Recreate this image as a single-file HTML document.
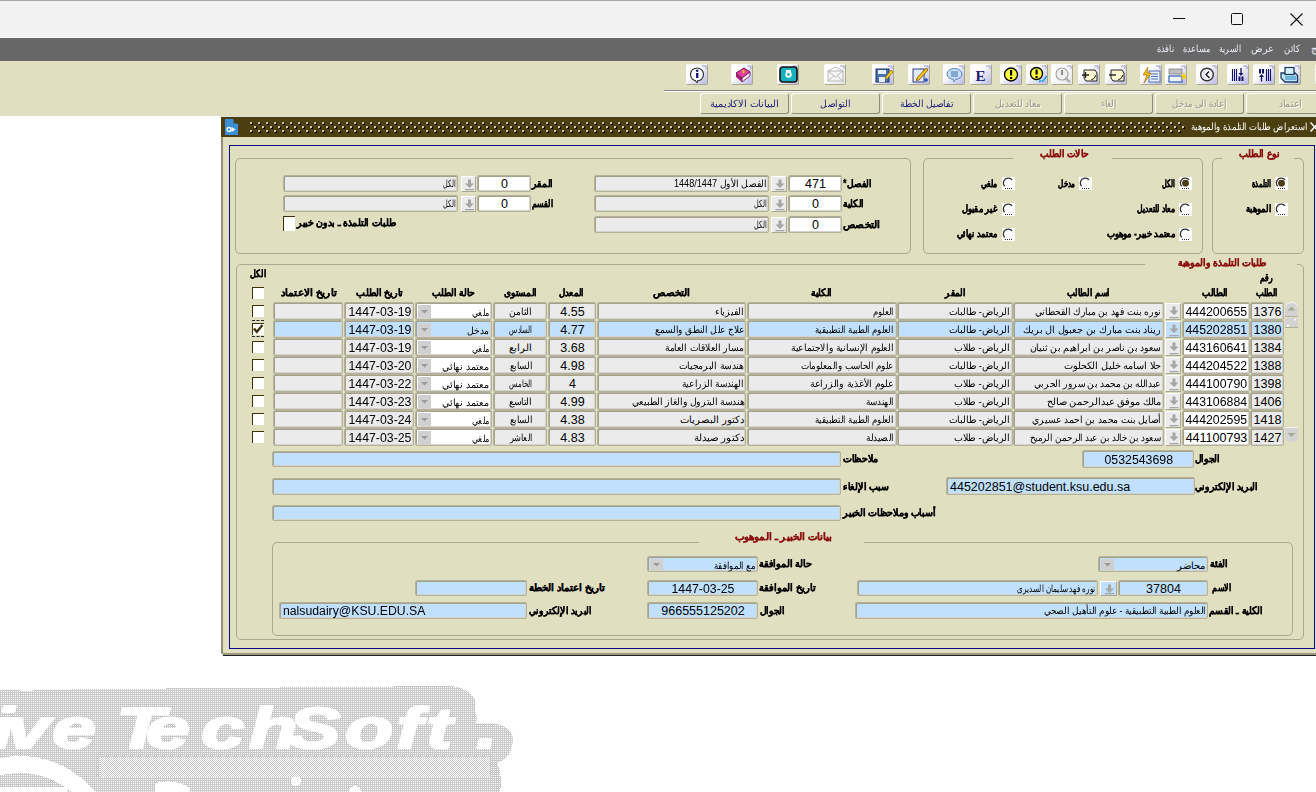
<!DOCTYPE html>
<html><head><meta charset="utf-8">
<style>
*{box-sizing:border-box;margin:0;padding:0}
html,body{width:1316px;height:792px;overflow:hidden;background:#fff;font-family:"Liberation Sans",sans-serif;font-size:11px;color:#000;position:relative}
.a{position:absolute}
.s{display:inline-block;white-space:nowrap}
.ib{width:22px;height:21px;border-radius:2px;border:1px solid #fcfcfc;border-right:2px solid #a9a78e;border-bottom:2px solid #a9a78e}
.ib svg{position:absolute;left:0;top:0}
.btn{width:89px;height:21px;border:1px solid #fff;border-right-color:#8d8c76;border-bottom-color:#8d8c76;border-radius:3px}
.lbl{font-weight:bold;font-size:10px;white-space:nowrap;direction:rtl;-webkit-text-stroke:0.3px #000}
.gt{font-weight:bold;font-size:10px;white-space:nowrap;direction:rtl;color:#8b1010;-webkit-text-stroke:0.3px #8b1010}
.ar{font-size:10px;white-space:nowrap;direction:rtl}
.nm{font-size:12.5px;white-space:nowrap}
.fld{border:1px solid #b4b29a;box-shadow:inset 1px 1px 0 #a3a189,inset -1px -1px 0 #d4d4ca;border-radius:2px}
.lov{border:1px solid #fff;border-right-color:#a9a890;border-bottom-color:#a9a890}
.rad{width:13px;height:13px;background:#fff}
.chk{width:12px;height:12px;background:#fff;border-top:1px solid #3c3205;border-left:1px solid #3c3205}
</style></head><body>
<div class="a" style="left:0px;top:0px;width:1316px;height:38px;background:#f2f2f2;border-top:1px solid #a8a8a8"></div>
<div class="a" style="left:1173px;top:18px;width:12px;height:1px;background:#111"></div>
<div class="a" style="left:1231px;top:13px;width:12px;height:12px;border:1px solid #111;border-radius:1.5px"></div>
<svg class="a" style="left:1290px;top:13px" width="13" height="13"><path d="M0.5 0.5 L12.5 12.5 M12.5 0.5 L0.5 12.5" stroke="#111" stroke-width="1.1"/></svg>
<div class="a" style="left:0px;top:37px;width:1316px;height:1px;background:#fbfbfb"></div>
<div class="a" style="left:0px;top:38px;width:1316px;height:23px;background:#676767"></div>
<div class="a ar" style="left:1026px;top:41.0px;width:300px;height:16px;line-height:16px;text-align:right;color:#e9eef6"><span id="t1" class="s">دمج</span></div>
<div class="a ar" style="left:1000px;top:41.0px;width:300px;height:16px;line-height:16px;text-align:right;color:#e9eef6"><span id="t2" class="s" style="transform:scaleX(0.8421);transform-origin:right center">كائن</span></div>
<div class="a ar" style="left:974px;top:41.0px;width:300px;height:16px;line-height:16px;text-align:right;color:#e9eef6"><span id="t3" class="s" style="transform:scaleX(0.9583);transform-origin:right center">عرض</span></div>
<div class="a ar" style="left:941px;top:41.0px;width:300px;height:16px;line-height:16px;text-align:right;color:#e9eef6"><span id="t4" class="s" style="transform:scaleX(0.7586);transform-origin:right center">السرية</span></div>
<div class="a ar" style="left:910px;top:41.0px;width:300px;height:16px;line-height:16px;text-align:right;color:#e9eef6"><span id="t5" class="s" style="transform:scaleX(0.8182);transform-origin:right center">مساعدة</span></div>
<div class="a ar" style="left:874px;top:41.0px;width:300px;height:16px;line-height:16px;text-align:right;color:#e9eef6"><span id="t6" class="s" style="transform:scaleX(0.8095);transform-origin:right center">نافذة</span></div>
<div class="a" style="left:0px;top:61px;width:1316px;height:55px;background:#e0dfc0"></div>
<div class="a" style="left:664px;top:90px;width:652px;height:1px;background:#858585"></div>
<div class="a" style="left:664px;top:91px;width:652px;height:1px;background:#ffffff"></div>
<div class="a ib" style="left:686px;top:64px"><svg width="20" height="19"><defs><linearGradient id="g686" x1="0" y1="0" x2="1" y2="1"><stop offset="0.35" stop-color="#fff"/><stop offset="1" stop-color="#b9b9e2"/></linearGradient></defs><rect x="0" y="0" width="20" height="19" fill="url(#g686)"/><path d="M15 1 h4 v3" stroke="#9b9bd0" stroke-width="1" fill="none"/><circle cx="10" cy="9.5" r="6.5" fill="#fff" stroke="#333" stroke-width="1.2"/><path d="M8 15 l2 3 l1 -3" fill="#fff" stroke="#333" stroke-width="1"/><rect x="9" y="8" width="2.4" height="5" fill="#1a1a80"/><circle cx="10.2" cy="5.8" r="1.3" fill="#1a1a80"/></svg></div>
<div class="a ib" style="left:731px;top:64px"><svg width="20" height="19"><defs><linearGradient id="g731" x1="0" y1="0" x2="1" y2="1"><stop offset="0.35" stop-color="#fff"/><stop offset="1" stop-color="#b9b9e2"/></linearGradient></defs><rect x="0" y="0" width="20" height="19" fill="url(#g731)"/><path d="M15 1 h4 v3" stroke="#9b9bd0" stroke-width="1" fill="none"/><path d="M4 8 L12 3 L18 7 L10 13 Z" fill="#e040a0" stroke="#701050" stroke-width="1"/><path d="M4 8 L10 13 L10 17 L4 12 Z" fill="#a02070"/><path d="M10 13 L18 7 L18 11 L10 17 Z" fill="#f8e0f0" stroke="#701050" stroke-width="0.8"/><path d="M10 6 q2 -1 2 1 l-1 1" stroke="#ffd000" stroke-width="1.3" fill="none"/></svg></div>
<div class="a ib" style="left:777px;top:64px"><svg width="20" height="19"><defs><linearGradient id="g777" x1="0" y1="0" x2="1" y2="1"><stop offset="0.35" stop-color="#fff"/><stop offset="1" stop-color="#b9b9e2"/></linearGradient></defs><rect x="0" y="0" width="20" height="19" fill="url(#g777)"/><path d="M15 1 h4 v3" stroke="#9b9bd0" stroke-width="1" fill="none"/><rect x="2" y="2" width="17" height="15" rx="3" fill="#1ab0c0" stroke="#111" stroke-width="1.6"/><circle cx="10.5" cy="9.5" r="3.2" fill="#fff"/><circle cx="10.5" cy="9.5" r="1.4" fill="#1ab0c0"/><rect x="8" y="5" width="5" height="2" fill="#fff"/></svg></div>
<div class="a ib" style="left:824px;top:64px"><svg width="20" height="19"><defs><linearGradient id="g824" x1="0" y1="0" x2="1" y2="1"><stop offset="0.35" stop-color="#fff"/><stop offset="1" stop-color="#e4e4e8"/></linearGradient></defs><rect x="0" y="0" width="20" height="19" fill="url(#g824)"/><path d="M15 1 h4 v3" stroke="#9b9bd0" stroke-width="1" fill="none"/><rect x="3" y="6" width="15" height="10" fill="#f4f4f4" stroke="#b8b8b8" stroke-width="1"/><path d="M3 6 L10.5 12 L18 6 M3 16 L8.5 11 M18 16 L12.5 11 M3 6 L10.5 2 L18 6" stroke="#b8b8b8" stroke-width="1" fill="none"/></svg></div>
<div class="a ib" style="left:872px;top:64px"><svg width="20" height="19"><defs><linearGradient id="g872" x1="0" y1="0" x2="1" y2="1"><stop offset="0.35" stop-color="#fff"/><stop offset="1" stop-color="#b9b9e2"/></linearGradient></defs><rect x="0" y="0" width="20" height="19" fill="url(#g872)"/><path d="M15 1 h4 v3" stroke="#9b9bd0" stroke-width="1" fill="none"/><rect x="3" y="4" width="13" height="13" fill="#4a70b0" stroke="#203060" stroke-width="1"/><rect x="5" y="5" width="8" height="4" fill="#e8eef8"/><rect x="6" y="12" width="6" height="5" fill="#e8eef8"/><path d="M12 13 L18 5 L20 7 L14 14 Z" fill="#ffd020" stroke="#806000" stroke-width="0.7"/></svg></div>
<div class="a ib" style="left:908px;top:64px"><svg width="20" height="19"><defs><linearGradient id="g908" x1="0" y1="0" x2="1" y2="1"><stop offset="0.35" stop-color="#fff"/><stop offset="1" stop-color="#b9b9e2"/></linearGradient></defs><rect x="0" y="0" width="20" height="19" fill="url(#g908)"/><path d="M15 1 h4 v3" stroke="#9b9bd0" stroke-width="1" fill="none"/><rect x="4" y="4" width="11" height="13" fill="#e0e8f8" stroke="#304080" stroke-width="1"/><path d="M8 13 L17 3 L19 5 L10 15 L7.5 15.5 Z" fill="#ffc020" stroke="#705000" stroke-width="0.8"/><path d="M15 15 h4 M17 13 v4" stroke="#2050c0" stroke-width="1.4"/></svg></div>
<div class="a ib" style="left:943px;top:64px"><svg width="20" height="19"><defs><linearGradient id="g943" x1="0" y1="0" x2="1" y2="1"><stop offset="0.35" stop-color="#fff"/><stop offset="1" stop-color="#b9b9e2"/></linearGradient></defs><rect x="0" y="0" width="20" height="19" fill="url(#g943)"/><path d="M15 1 h4 v3" stroke="#9b9bd0" stroke-width="1" fill="none"/><ellipse cx="10.5" cy="9" rx="7.5" ry="5.5" fill="#c8e0f8" stroke="#5080c0" stroke-width="1"/><path d="M7 7 h7 M7 9 h7 M7 11 h7" stroke="#3060a0" stroke-width="0.9"/><path d="M9 14 l1 3 l2 -3" fill="#c8e0f8" stroke="#5080c0" stroke-width="0.8"/></svg></div>
<div class="a ib" style="left:970px;top:64px"><svg width="20" height="19"><defs><linearGradient id="g970" x1="0" y1="0" x2="1" y2="1"><stop offset="0.35" stop-color="#fff"/><stop offset="1" stop-color="#b9b9e2"/></linearGradient></defs><rect x="0" y="0" width="20" height="19" fill="url(#g970)"/><path d="M15 1 h4 v3" stroke="#9b9bd0" stroke-width="1" fill="none"/><text x="4.5" y="16" font-family="Liberation Serif" font-weight="bold" font-size="15" fill="#1a1a70">E</text></svg></div>
<div class="a ib" style="left:1000px;top:64px"><svg width="20" height="19"><defs><linearGradient id="g1000" x1="0" y1="0" x2="1" y2="1"><stop offset="0.35" stop-color="#fff"/><stop offset="1" stop-color="#b9b9e2"/></linearGradient></defs><rect x="0" y="0" width="20" height="19" fill="url(#g1000)"/><path d="M15 1 h4 v3" stroke="#9b9bd0" stroke-width="1" fill="none"/><circle cx="10" cy="9.5" r="6.5" fill="#ffff40" stroke="#000" stroke-width="1.4"/><rect x="9" y="5" width="2.2" height="5.5" fill="#000"/><rect x="9" y="12" width="2.2" height="2" fill="#000"/></svg></div>
<div class="a ib" style="left:1026px;top:64px"><svg width="20" height="19"><defs><linearGradient id="g1026" x1="0" y1="0" x2="1" y2="1"><stop offset="0.35" stop-color="#fff"/><stop offset="1" stop-color="#b9b9e2"/></linearGradient></defs><rect x="0" y="0" width="20" height="19" fill="url(#g1026)"/><path d="M15 1 h4 v3" stroke="#9b9bd0" stroke-width="1" fill="none"/><circle cx="9.5" cy="8.5" r="6" fill="#ffff40" stroke="#000" stroke-width="1.4"/><rect x="8.5" y="4.5" width="2.2" height="5" fill="#000"/><rect x="8.5" y="11" width="2.2" height="2" fill="#000"/><path d="M12 17 L14 15 M15 17 L20 11" stroke="#20a0e0" stroke-width="1.6"/></svg></div>
<div class="a ib" style="left:1051px;top:64px"><svg width="20" height="19"><defs><linearGradient id="g1051" x1="0" y1="0" x2="1" y2="1"><stop offset="0.35" stop-color="#fff"/><stop offset="1" stop-color="#e4e4e8"/></linearGradient></defs><rect x="0" y="0" width="20" height="19" fill="url(#g1051)"/><path d="M15 1 h4 v3" stroke="#9b9bd0" stroke-width="1" fill="none"/><circle cx="10" cy="9" r="6" fill="#f0f0f0" stroke="#a8a8a8" stroke-width="1.2"/><rect x="9" y="5" width="2" height="5" fill="#909090"/><path d="M13 13 L18 17" stroke="#b0b0b0" stroke-width="2.5"/></svg></div>
<div class="a ib" style="left:1078px;top:64px"><svg width="20" height="19"><defs><linearGradient id="g1078" x1="0" y1="0" x2="1" y2="1"><stop offset="0.35" stop-color="#fff"/><stop offset="1" stop-color="#b9b9e2"/></linearGradient></defs><rect x="0" y="0" width="20" height="19" fill="url(#g1078)"/><path d="M15 1 h4 v3" stroke="#9b9bd0" stroke-width="1" fill="none"/><path d="M5 5 H16 L18 8 V16 H7 L5 13 Z" fill="#fff8d0" stroke="#222" stroke-width="1"/><path d="M3 10 h7 M6.5 7 v6" stroke="#222" stroke-width="1.4"/><path d="M12 15 q4 -1 5 -5" stroke="#222" stroke-width="1" fill="none"/></svg></div>
<div class="a ib" style="left:1105px;top:64px"><svg width="20" height="19"><defs><linearGradient id="g1105" x1="0" y1="0" x2="1" y2="1"><stop offset="0.35" stop-color="#fff"/><stop offset="1" stop-color="#b9b9e2"/></linearGradient></defs><rect x="0" y="0" width="20" height="19" fill="url(#g1105)"/><path d="M15 1 h4 v3" stroke="#9b9bd0" stroke-width="1" fill="none"/><path d="M5 5 H16 L18 8 V16 H7 L5 13 Z" fill="#fff8d0" stroke="#222" stroke-width="1"/><path d="M3 10 h7" stroke="#222" stroke-width="1.4"/><path d="M12 15 q4 -1 5 -5" stroke="#222" stroke-width="1" fill="none"/></svg></div>
<div class="a ib" style="left:1140px;top:64px"><svg width="20" height="19"><defs><linearGradient id="g1140" x1="0" y1="0" x2="1" y2="1"><stop offset="0.35" stop-color="#fff"/><stop offset="1" stop-color="#b9b9e2"/></linearGradient></defs><rect x="0" y="0" width="20" height="19" fill="url(#g1140)"/><path d="M15 1 h4 v3" stroke="#9b9bd0" stroke-width="1" fill="none"/><rect x="8" y="6" width="11" height="11" fill="#e8f0ff" stroke="#5070b0" stroke-width="1"/><path d="M10 9 h7 M10 11.5 h7 M10 14 h7" stroke="#5070b0" stroke-width="1"/><path d="M7 2 L2 10 H6 L3 18 L10 8 H6 Z" fill="#ffc000" stroke="#a06000" stroke-width="0.6"/></svg></div>
<div class="a ib" style="left:1165px;top:64px"><svg width="20" height="19"><defs><linearGradient id="g1165" x1="0" y1="0" x2="1" y2="1"><stop offset="0.35" stop-color="#fff"/><stop offset="1" stop-color="#b9b9e2"/></linearGradient></defs><rect x="0" y="0" width="20" height="19" fill="url(#g1165)"/><path d="M15 1 h4 v3" stroke="#9b9bd0" stroke-width="1" fill="none"/><rect x="3" y="4" width="13" height="5" fill="#c0c0c0" stroke="#808080" stroke-width="0.8"/><rect x="3" y="11" width="13" height="6" fill="#f0f4ff" stroke="#3060b0" stroke-width="1.2"/><path d="M17 10 l1 -3 l1 3 l3 0 l-2.5 2 l1 3 l-2.5 -2 l-2.5 2 l1 -3 l-2.5 -2 z" fill="#ffd000"/></svg></div>
<div class="a ib" style="left:1196px;top:64px"><svg width="20" height="19"><defs><linearGradient id="g1196" x1="0" y1="0" x2="1" y2="1"><stop offset="0.35" stop-color="#fff"/><stop offset="1" stop-color="#b9b9e2"/></linearGradient></defs><rect x="0" y="0" width="20" height="19" fill="url(#g1196)"/><path d="M15 1 h4 v3" stroke="#9b9bd0" stroke-width="1" fill="none"/><circle cx="10" cy="9.5" r="6.3" fill="#f4f4fa" stroke="#333" stroke-width="1.4"/><path d="M12 6.5 L9 9.5 L12.5 13" stroke="#111" stroke-width="1.3" fill="none"/><circle cx="7" cy="7" r="0.6" fill="#8080d0"/><circle cx="7" cy="12" r="0.6" fill="#8080d0"/></svg></div>
<div class="a ib" style="left:1227px;top:64px"><svg width="20" height="19"><defs><linearGradient id="g1227" x1="0" y1="0" x2="1" y2="1"><stop offset="0.35" stop-color="#fff"/><stop offset="1" stop-color="#b9b9e2"/></linearGradient></defs><rect x="0" y="0" width="20" height="19" fill="url(#g1227)"/><path d="M15 1 h4 v3" stroke="#9b9bd0" stroke-width="1" fill="none"/><path d="M4.5 4 v12 M6.5 4 v12 M8.5 4 v12" stroke="#10106a" stroke-width="1.1"/><path d="M13 3 v6" stroke="#10106a" stroke-width="1.3"/><path d="M10.5 8 h5 l-2.5 3 z" fill="#10106a"/><rect x="10.5" y="11.5" width="2" height="4.5" fill="#10106a"/><rect x="13.5" y="11.5" width="2" height="4.5" fill="#10106a"/></svg></div>
<div class="a ib" style="left:1253px;top:64px"><svg width="20" height="19"><defs><linearGradient id="g1253" x1="0" y1="0" x2="1" y2="1"><stop offset="0.35" stop-color="#fff"/><stop offset="1" stop-color="#b9b9e2"/></linearGradient></defs><rect x="0" y="0" width="20" height="19" fill="url(#g1253)"/><path d="M15 1 h4 v3" stroke="#9b9bd0" stroke-width="1" fill="none"/><path d="M12.5 4 v12 M14.5 4 v12 M16.5 4 v12" stroke="#10106a" stroke-width="1.1"/><rect x="5" y="4" width="2" height="4.5" fill="#10106a"/><rect x="8" y="4" width="2" height="4.5" fill="#10106a"/><path d="M7.5 11 v5.5" stroke="#10106a" stroke-width="1.3"/><path d="M5 12 h5 l-2.5 -3 z" fill="#10106a"/></svg></div>
<div class="a ib" style="left:1279px;top:64px"><svg width="20" height="19"><defs><linearGradient id="g1279" x1="0" y1="0" x2="1" y2="1"><stop offset="0.35" stop-color="#fff"/><stop offset="1" stop-color="#b9b9e2"/></linearGradient></defs><rect x="0" y="0" width="20" height="19" fill="url(#g1279)"/><path d="M15 1 h4 v3" stroke="#9b9bd0" stroke-width="1" fill="none"/><path d="M1 8 H15 L17.5 10.5 V17 H5 L1 13 Z" fill="#bfe6f2" stroke="#1c3a60" stroke-width="1.3"/><rect x="5" y="11" width="11" height="4" fill="#6fb3d8"/><rect x="5" y="2.5" width="9" height="7" fill="#d8f0f8" stroke="#1c3a60" stroke-width="1.3"/></svg></div>
<div class="a ib" style="left:1315px;top:64px"><svg width="20" height="19"><defs><linearGradient id="g1315" x1="0" y1="0" x2="1" y2="1"><stop offset="0.35" stop-color="#fff"/><stop offset="1" stop-color="#b9b9e2"/></linearGradient></defs><rect x="0" y="0" width="20" height="19" fill="url(#g1315)"/><path d="M15 1 h4 v3" stroke="#9b9bd0" stroke-width="1" fill="none"/></svg></div>
<div class="a btn" style="left:700px;top:93px"></div>
<div class="a ar" style="left:594.5px;top:95.5px;width:300px;height:16px;line-height:16px;text-align:center;color:#1c1c7a"><span id="t7" class="s" style="transform:scaleX(0.9718);transform-origin:center center">البيانات الاكاديمية</span></div>
<div class="a btn" style="left:791px;top:93px"></div>
<div class="a ar" style="left:685.5px;top:95.5px;width:300px;height:16px;line-height:16px;text-align:center;color:#1c1c7a"><span id="t8" class="s" style="transform:scaleX(0.9091);transform-origin:center center">التواصل</span></div>
<div class="a btn" style="left:882px;top:93px"></div>
<div class="a ar" style="left:776.5px;top:95.5px;width:300px;height:16px;line-height:16px;text-align:center;color:#1c1c7a"><span id="t9" class="s" style="transform:scaleX(0.9138);transform-origin:center center">تفاصيل الخطة</span></div>
<div class="a btn" style="left:973px;top:93px"></div>
<div class="a ar" style="left:867.5px;top:95.5px;width:300px;height:16px;line-height:16px;text-align:center;color:#98978a;text-shadow:1px 1px 0 #fbfbf3"><span id="t10" class="s" style="transform:scaleX(0.9200);transform-origin:center center">معاد للتعديل</span></div>
<div class="a btn" style="left:1064px;top:93px"></div>
<div class="a ar" style="left:958.5px;top:95.5px;width:300px;height:16px;line-height:16px;text-align:center;color:#98978a;text-shadow:1px 1px 0 #fbfbf3"><span id="t11" class="s" style="transform:scaleX(0.8421);transform-origin:center center">إلغاء</span></div>
<div class="a btn" style="left:1155px;top:93px"></div>
<div class="a ar" style="left:1049.5px;top:95.5px;width:300px;height:16px;line-height:16px;text-align:center;color:#98978a;text-shadow:1px 1px 0 #fbfbf3"><span id="t12" class="s" style="transform:scaleX(0.8462);transform-origin:center center">إعادة الى مدخل</span></div>
<div class="a btn" style="left:1246px;top:93px"></div>
<div class="a ar" style="left:1140.5px;top:95.5px;width:300px;height:16px;line-height:16px;text-align:center;color:#98978a;text-shadow:1px 1px 0 #fbfbf3"><span id="t13" class="s" style="transform:scaleX(0.9200);transform-origin:center center">اعتماد</span></div>
<div class="a" style="left:221px;top:116px;width:1095px;height:1px;background:#dcdcdc"></div>
<svg class="a" style="left:221px;top:117px" width="1095" height="20"><defs><pattern id="dots" x="29" y="5" width="8" height="8" patternUnits="userSpaceOnUse"><rect x="0" y="0" width="2" height="2" fill="#cdc9ad"/><rect x="2" y="1" width="1" height="2" fill="#000"/><rect x="1" y="2" width="2" height="1" fill="#000"/><rect x="4" y="4" width="2" height="2" fill="#cdc9ad"/><rect x="6" y="5" width="1" height="2" fill="#000"/><rect x="5" y="6" width="2" height="1" fill="#000"/></pattern></defs><rect width="1095" height="20" fill="#4b3e0f"/><rect x="29" y="5" width="1066" height="11" fill="url(#dots)"/></svg>
<div class="a" style="left:221px;top:137px;width:1095px;height:518px;background:#e0dfc0;border-left:2px solid #8f8e7a;border-bottom:2px solid #9a9883;border-bottom-left-radius:3px"></div>
<div class="a" style="left:223px;top:655px;width:1093px;height:1px;background:#222"></div>
<div class="a" style="left:229px;top:145px;width:1086px;height:504px;border:1px solid #0a0a8c"></div>
<svg class="a" style="left:225px;top:119px" width="14" height="16"><path d="M0 0 H8 L13 5 V16 H0 Z" fill="#3a8fd6"/><path d="M8.5 0 L13 4.5 H8.5 Z" fill="#4b3e0f"/><path d="M6.5 8 L10.5 10.5 L6.5 13 Z" fill="#fff"/><circle cx="4" cy="10.5" r="2" fill="none" stroke="#fff" stroke-width="1.3"/></svg>
<div class="a" style="left:1186px;top:119px;width:130px;height:16px;background:#4b3e0f"></div>
<div class="a ar" style="left:1007px;top:119.0px;width:300px;height:16px;line-height:16px;text-align:right;color:#fff"><span id="t14" class="s" style="transform:scaleX(0.8467);transform-origin:right center">استعراض طلبات التلمذة والموهبة</span></div>
<svg class="a" style="left:1309px;top:121px" width="8" height="12"><path d="M1.5 1.5 L10 10.5 M10 1.5 L1.5 10.5" stroke="#fff" stroke-width="1.6" fill="none"/></svg>
<div class="a" style="left:1212px;top:158px;width:92px;height:96px;border:1px solid #a9a890;border-radius:5px"></div>
<div class="a" style="left:1222px;top:150px;width:72px;height:10px;background:#e0dfc0"></div>
<div class="a gt" style="left:980px;top:147.0px;width:300px;height:14px;line-height:14px;text-align:right;"><span id="t15" class="s" style="transform:scaleX(0.9318);transform-origin:right center">نوع الطلب</span></div>
<div class="a rad" style="left:1275px;top:177px"><svg width="13" height="13"><path d="M2.6 9.3 A4.6 4.6 0 0 1 10 2.8" stroke="#333" fill="none" stroke-width="1.3"/><circle cx="6.5" cy="6.2" r="3.4" fill="#4b3e0f"/><path d="M3 11.5 h7" stroke="#333" stroke-dasharray="1 1" stroke-width="1"/></svg></div>
<div class="a lbl" style="left:971px;top:177.0px;width:300px;height:14px;line-height:14px;text-align:right;"><span id="t16" class="s" style="transform:scaleX(0.6786);transform-origin:right center">التلمذة</span></div>
<div class="a rad" style="left:1275px;top:203px"><svg width="13" height="13"><path d="M2.6 9.3 A4.6 4.6 0 0 1 10 2.8" stroke="#333" fill="none" stroke-width="1.3"/><path d="M3 11.5 h7" stroke="#333" stroke-dasharray="1 1" stroke-width="1"/></svg></div>
<div class="a lbl" style="left:971px;top:202.0px;width:300px;height:14px;line-height:14px;text-align:right;"><span id="t17" class="s" style="transform:scaleX(0.8333);transform-origin:right center">الموهبة</span></div>
<div class="a" style="left:923px;top:158px;width:280px;height:96px;border:1px solid #a9a890;border-radius:5px"></div>
<div class="a" style="left:1013px;top:150px;width:99px;height:10px;background:#e0dfc0"></div>
<div class="a gt" style="left:789px;top:147.0px;width:300px;height:14px;line-height:14px;text-align:right;"><span id="t18" class="s" style="transform:scaleX(0.9074);transform-origin:right center">حالات الطلب</span></div>
<div class="a rad" style="left:1179px;top:177px"><svg width="13" height="13"><path d="M2.6 9.3 A4.6 4.6 0 0 1 10 2.8" stroke="#333" fill="none" stroke-width="1.3"/><circle cx="6.5" cy="6.2" r="3.4" fill="#4b3e0f"/><path d="M3 11.5 h7" stroke="#333" stroke-dasharray="1 1" stroke-width="1"/></svg></div>
<div class="a lbl" style="left:875px;top:177.0px;width:300px;height:14px;line-height:14px;text-align:right;"><span id="t19" class="s" style="transform:scaleX(0.6500);transform-origin:right center">الكل</span></div>
<div class="a rad" style="left:1079px;top:177px"><svg width="13" height="13"><path d="M2.6 9.3 A4.6 4.6 0 0 1 10 2.8" stroke="#333" fill="none" stroke-width="1.3"/><path d="M3 11.5 h7" stroke="#333" stroke-dasharray="1 1" stroke-width="1"/></svg></div>
<div class="a lbl" style="left:775px;top:177.0px;width:300px;height:14px;line-height:14px;text-align:right;"><span id="t20" class="s" style="transform:scaleX(0.7083);transform-origin:right center">مدخل</span></div>
<div class="a rad" style="left:1002px;top:177px"><svg width="13" height="13"><path d="M2.6 9.3 A4.6 4.6 0 0 1 10 2.8" stroke="#333" fill="none" stroke-width="1.3"/><path d="M3 11.5 h7" stroke="#333" stroke-dasharray="1 1" stroke-width="1"/></svg></div>
<div class="a lbl" style="left:697px;top:177.0px;width:300px;height:14px;line-height:14px;text-align:right;"><span id="t21" class="s" style="transform:scaleX(0.7619);transform-origin:right center">ملغي</span></div>
<div class="a rad" style="left:1179px;top:203px"><svg width="13" height="13"><path d="M2.6 9.3 A4.6 4.6 0 0 1 10 2.8" stroke="#333" fill="none" stroke-width="1.3"/><path d="M3 11.5 h7" stroke="#333" stroke-dasharray="1 1" stroke-width="1"/></svg></div>
<div class="a lbl" style="left:875px;top:202.0px;width:300px;height:14px;line-height:14px;text-align:right;"><span id="t22" class="s" style="transform:scaleX(0.7600);transform-origin:right center">معاد للتعديل</span></div>
<div class="a rad" style="left:1002px;top:203px"><svg width="13" height="13"><path d="M2.6 9.3 A4.6 4.6 0 0 1 10 2.8" stroke="#333" fill="none" stroke-width="1.3"/><path d="M3 11.5 h7" stroke="#333" stroke-dasharray="1 1" stroke-width="1"/></svg></div>
<div class="a lbl" style="left:697px;top:202.0px;width:300px;height:14px;line-height:14px;text-align:right;"><span id="t23" class="s" style="transform:scaleX(0.8333);transform-origin:right center">غير مقبول</span></div>
<div class="a rad" style="left:1179px;top:228px"><svg width="13" height="13"><path d="M2.6 9.3 A4.6 4.6 0 0 1 10 2.8" stroke="#333" fill="none" stroke-width="1.3"/><path d="M3 11.5 h7" stroke="#333" stroke-dasharray="1 1" stroke-width="1"/></svg></div>
<div class="a lbl" style="left:875px;top:227.0px;width:300px;height:14px;line-height:14px;text-align:right;"><span id="t24" class="s" style="transform:scaleX(0.8500);transform-origin:right center">معتمد خبير- موهوب</span></div>
<div class="a rad" style="left:1002px;top:228px"><svg width="13" height="13"><path d="M2.6 9.3 A4.6 4.6 0 0 1 10 2.8" stroke="#333" fill="none" stroke-width="1.3"/><path d="M3 11.5 h7" stroke="#333" stroke-dasharray="1 1" stroke-width="1"/></svg></div>
<div class="a lbl" style="left:697px;top:227.0px;width:300px;height:14px;line-height:14px;text-align:right;"><span id="t25" class="s" style="transform:scaleX(0.8163);transform-origin:right center">معتمد نهائي</span></div>
<div class="a" style="left:235px;top:158px;width:676px;height:96px;border:1px solid #a9a890;border-radius:5px"></div>
<div class="a fld" style="left:788px;top:175px;width:54px;height:17px;background:#fff"></div>
<div class="a nm" style="left:769.0px;top:176.0px;width:93px;height:16px;line-height:16px;text-align:center;"><span id="t26" class="s">471</span></div>
<div class="a lov" style="left:771px;top:176px;width:16px;height:16px;background:#ebebeb"><svg width="16" height="16"><path d="M6.5 2.5 h3 v4 h3 l-4.5 4.5 l-4.5 -4.5 h3 z" fill="#a6a6a6"/><rect x="3.5" y="12" width="9" height="1.3" fill="#a6a6a6"/></svg></div>
<div class="a fld" style="left:594px;top:175px;width:175px;height:17px;background:#ebebeb"></div>
<div class="a ar" style="left:467px;top:177.0px;width:300px;height:14px;line-height:14px;text-align:right;"><span id="t27" class="s" style="transform:scaleX(0.9118);transform-origin:right center">الفصل الأول 1448/1447</span></div>
<div class="a lbl" style="left:572px;top:177.0px;width:300px;height:14px;line-height:14px;text-align:right;"><span id="t28" class="s" style="transform:scaleX(0.9062);transform-origin:right center">الفصل*</span></div>
<div class="a fld" style="left:788px;top:195px;width:54px;height:17px;background:#fff"></div>
<div class="a nm" style="left:769.0px;top:196.0px;width:93px;height:16px;line-height:16px;text-align:center;"><span id="t29" class="s">0</span></div>
<div class="a lov" style="left:771px;top:196px;width:16px;height:16px;background:#ebebeb"><svg width="16" height="16"><path d="M6.5 2.5 h3 v4 h3 l-4.5 4.5 l-4.5 -4.5 h3 z" fill="#a6a6a6"/><rect x="3.5" y="12" width="9" height="1.3" fill="#a6a6a6"/></svg></div>
<div class="a fld" style="left:594px;top:195px;width:175px;height:17px;background:#ebebeb"></div>
<div class="a ar" style="left:467px;top:197.0px;width:300px;height:14px;line-height:14px;text-align:right;"><span id="t30" class="s" style="transform:scaleX(0.6500);transform-origin:right center">الكل</span></div>
<div class="a lbl" style="left:564px;top:197.0px;width:300px;height:14px;line-height:14px;text-align:right;"><span id="t31" class="s" style="transform:scaleX(0.9130);transform-origin:right center">الكلية</span></div>
<div class="a fld" style="left:788px;top:216px;width:54px;height:17px;background:#fff"></div>
<div class="a nm" style="left:769.0px;top:217.0px;width:93px;height:16px;line-height:16px;text-align:center;"><span id="t32" class="s">0</span></div>
<div class="a lov" style="left:771px;top:217px;width:16px;height:16px;background:#ebebeb"><svg width="16" height="16"><path d="M6.5 2.5 h3 v4 h3 l-4.5 4.5 l-4.5 -4.5 h3 z" fill="#a6a6a6"/><rect x="3.5" y="12" width="9" height="1.3" fill="#a6a6a6"/></svg></div>
<div class="a fld" style="left:594px;top:216px;width:175px;height:17px;background:#ebebeb"></div>
<div class="a ar" style="left:467px;top:218.0px;width:300px;height:14px;line-height:14px;text-align:right;"><span id="t33" class="s" style="transform:scaleX(0.6500);transform-origin:right center">الكل</span></div>
<div class="a lbl" style="left:580px;top:218.0px;width:300px;height:14px;line-height:14px;text-align:right;"><span id="t34" class="s" style="transform:scaleX(1.0278);transform-origin:right center">التخصص</span></div>
<div class="a fld" style="left:477px;top:175px;width:54px;height:17px;background:#fff"></div>
<div class="a nm" style="left:458.0px;top:176.0px;width:93px;height:16px;line-height:16px;text-align:center;"><span id="t35" class="s">0</span></div>
<div class="a lov" style="left:461px;top:176px;width:15px;height:16px;background:#ebebeb"><svg width="15" height="16"><path d="M6.0 2.5 h3 v4 h3 l-4.5 4.5 l-4.5 -4.5 h3 z" fill="#a6a6a6"/><rect x="3.0" y="12" width="9" height="1.3" fill="#a6a6a6"/></svg></div>
<div class="a fld" style="left:283px;top:175px;width:175px;height:17px;background:#ebebeb"></div>
<div class="a ar" style="left:156px;top:177.0px;width:300px;height:14px;line-height:14px;text-align:right;"><span id="t36" class="s" style="transform:scaleX(0.6500);transform-origin:right center">الكل</span></div>
<div class="a lbl" style="left:253px;top:177.0px;width:300px;height:14px;line-height:14px;text-align:right;"><span id="t37" class="s" style="transform:scaleX(0.9130);transform-origin:right center">المقر</span></div>
<div class="a fld" style="left:477px;top:195px;width:54px;height:17px;background:#fff"></div>
<div class="a nm" style="left:458.0px;top:196.0px;width:93px;height:16px;line-height:16px;text-align:center;"><span id="t38" class="s">0</span></div>
<div class="a lov" style="left:461px;top:196px;width:15px;height:16px;background:#ebebeb"><svg width="15" height="16"><path d="M6.0 2.5 h3 v4 h3 l-4.5 4.5 l-4.5 -4.5 h3 z" fill="#a6a6a6"/><rect x="3.0" y="12" width="9" height="1.3" fill="#a6a6a6"/></svg></div>
<div class="a fld" style="left:283px;top:195px;width:175px;height:17px;background:#ebebeb"></div>
<div class="a ar" style="left:156px;top:197.0px;width:300px;height:14px;line-height:14px;text-align:right;"><span id="t39" class="s" style="transform:scaleX(0.6500);transform-origin:right center">الكل</span></div>
<div class="a lbl" style="left:253px;top:197.0px;width:300px;height:14px;line-height:14px;text-align:right;"><span id="t40" class="s" style="transform:scaleX(0.7778);transform-origin:right center">القسم</span></div>
<div class="a" style="left:283px;top:216px;width:12px;height:15px;background:#fff;border-top:1px solid #3c3205;border-left:1px solid #3c3205"></div>
<div class="a lbl" style="left:96px;top:216.0px;width:300px;height:14px;line-height:14px;text-align:right;"><span id="t41" class="s" style="transform:scaleX(0.9340);transform-origin:right center">طلبات التلمذة ـ بدون خبير</span></div>
<div class="a" style="left:236px;top:264px;width:1068px;height:376px;border:1px solid #a9a890;border-radius:5px"></div>
<div class="a" style="left:1145px;top:258px;width:152px;height:12px;background:#e0dfc0"></div>
<div class="a gt" style="left:967px;top:256.0px;width:300px;height:14px;line-height:14px;text-align:right;"><span id="t42" class="s" style="transform:scaleX(0.9368);transform-origin:right center">طلبات التلمذة والموهبة</span></div>
<div class="a lbl" style="left:1116.5px;top:271.0px;width:300px;height:14px;line-height:14px;text-align:center;"><span id="t43" class="s" style="transform:scaleX(0.7647);transform-origin:center center">رقم</span></div>
<div class="a lbl" style="left:1116.5px;top:286.0px;width:300px;height:14px;line-height:14px;text-align:center;"><span id="t44" class="s" style="transform:scaleX(0.8148);transform-origin:center center">الطلب</span></div>
<div class="a lbl" style="left:1065.0px;top:286.0px;width:300px;height:14px;line-height:14px;text-align:center;"><span id="t45" class="s" style="transform:scaleX(0.8667);transform-origin:center center">الطالب</span></div>
<div class="a lbl" style="left:938.5px;top:286.0px;width:300px;height:14px;line-height:14px;text-align:center;"><span id="t46" class="s" style="transform:scaleX(0.8431);transform-origin:center center">اسم الطالب</span></div>
<div class="a lbl" style="left:805.0px;top:286.0px;width:300px;height:14px;line-height:14px;text-align:center;"><span id="t47" class="s" style="transform:scaleX(0.8696);transform-origin:center center">المقر</span></div>
<div class="a lbl" style="left:671.0px;top:286.0px;width:300px;height:14px;line-height:14px;text-align:center;"><span id="t48" class="s" style="transform:scaleX(0.9130);transform-origin:center center">الكلية</span></div>
<div class="a lbl" style="left:522.0px;top:286.0px;width:300px;height:14px;line-height:14px;text-align:center;"><span id="t49" class="s" style="transform:scaleX(1.0278);transform-origin:center center">التخصص</span></div>
<div class="a lbl" style="left:421.29999999999995px;top:286.0px;width:300px;height:14px;line-height:14px;text-align:center;"><span id="t50" class="s" style="transform:scaleX(0.8621);transform-origin:center center">المعدل</span></div>
<div class="a lbl" style="left:370.0px;top:286.0px;width:300px;height:14px;line-height:14px;text-align:center;"><span id="t51" class="s" style="transform:scaleX(0.8919);transform-origin:center center">المستوى</span></div>
<div class="a lbl" style="left:303.6px;top:286.0px;width:300px;height:14px;line-height:14px;text-align:center;"><span id="t52" class="s" style="transform:scaleX(0.9149);transform-origin:center center">حالة الطلب</span></div>
<div class="a lbl" style="left:229.60000000000002px;top:286.0px;width:300px;height:14px;line-height:14px;text-align:center;"><span id="t53" class="s" style="transform:scaleX(0.9400);transform-origin:center center">تاريخ الطلب</span></div>
<div class="a lbl" style="left:158.5px;top:286.0px;width:300px;height:14px;line-height:14px;text-align:center;"><span id="t54" class="s" style="transform:scaleX(1.0370);transform-origin:center center">تاريخ الاعتماد</span></div>
<div class="a lbl" style="left:107.5px;top:267.0px;width:300px;height:14px;line-height:14px;text-align:center;"><span id="t55" class="s" style="transform:scaleX(0.8000);transform-origin:center center">الكل</span></div>
<div class="a chk" style="left:252px;top:287px"><svg width="12" height="12" style="position:absolute;left:-1px;top:-1px"></svg></div>
<div class="a fld" style="left:1250px;top:302px;width:34px;height:18px;background:#ebebeb"></div>
<div class="a nm" style="left:1231.0px;top:303.5px;width:73px;height:16px;line-height:16px;text-align:center;"><span id="t56" class="s">1376</span></div>
<div class="a fld" style="left:1182px;top:302px;width:68px;height:18px;background:#fff"></div>
<div class="a nm" style="left:1163.0px;top:303.5px;width:107px;height:16px;line-height:16px;text-align:center;"><span id="t57" class="s" style="transform:scaleX(0.9841);transform-origin:center center">444200655</span></div>
<div class="a lov" style="left:1165px;top:303px;width:16px;height:17px;background:#ebebeb"><svg width="16" height="17"><path d="M6.5 2.5 h3 v4 h3 l-4.5 4.5 l-4.5 -4.5 h3 z" fill="#a6a6a6"/><rect x="3.5" y="13" width="9" height="1.3" fill="#a6a6a6"/></svg></div>
<div class="a fld" style="left:1013px;top:302px;width:151px;height:18px;background:#ebebeb"></div>
<div class="a ar" style="left:861px;top:304.5px;width:300px;height:14px;line-height:14px;text-align:right;"><span id="t58" class="s" style="transform:scaleX(0.9197);transform-origin:right center">نوره بنت فهد بن مبارك القحطاني</span></div>
<div class="a fld" style="left:897px;top:302px;width:116px;height:18px;background:#ebebeb"></div>
<div class="a ar" style="left:710px;top:304.5px;width:300px;height:14px;line-height:14px;text-align:right;"><span id="t59" class="s" style="transform:scaleX(0.9385);transform-origin:right center">الرياض- طالبات</span></div>
<div class="a fld" style="left:747px;top:302px;width:150px;height:18px;background:#ebebeb"></div>
<div class="a ar" style="left:594px;top:304.5px;width:300px;height:14px;line-height:14px;text-align:right;"><span id="t60" class="s" style="transform:scaleX(0.8400);transform-origin:right center">العلوم</span></div>
<div class="a fld" style="left:597px;top:302px;width:149px;height:18px;background:#ebebeb"></div>
<div class="a ar" style="left:444px;top:304.5px;width:300px;height:14px;line-height:14px;text-align:right;"><span id="t61" class="s" style="transform:scaleX(0.9355);transform-origin:right center">الفيزياء</span></div>
<div class="a fld" style="left:548px;top:302px;width:48px;height:18px;background:#ebebeb"></div>
<div class="a nm" style="left:529.0px;top:303.5px;width:87px;height:16px;line-height:16px;text-align:center;"><span id="t62" class="s">4.55</span></div>
<div class="a fld" style="left:493px;top:302px;width:54px;height:18px;background:#ebebeb"></div>
<div class="a ar" style="left:370.5px;top:304.5px;width:300px;height:14px;line-height:14px;text-align:center;"><span id="t63" class="s" style="transform:scaleX(0.9200);transform-origin:center center">الثامن</span></div>
<div class="a fld" style="left:415px;top:302px;width:77px;height:18px;background:#fff"></div>
<div class="a ar" style="left:189px;top:305.5px;width:300px;height:14px;line-height:14px;text-align:right;"><span id="t64" class="s" style="transform:scaleX(0.8095);transform-origin:right center">ملغي</span></div>
<div class="a" style="left:418px;top:305px;width:13px;height:13px;background:#d0d0d0"><svg width="13" height="13"><path d="M3 5.0 h7 l-3.5 3.5 z" fill="#9a9a9a"/></svg></div>
<div class="a fld" style="left:344px;top:302px;width:70px;height:18px;background:#ebebeb"></div>
<div class="a nm" style="left:325.0px;top:303.5px;width:109px;height:16px;line-height:16px;text-align:center;"><span id="t65" class="s" style="transform:scaleX(0.9844);transform-origin:center center">1447-03-19</span></div>
<div class="a fld" style="left:273px;top:302px;width:70px;height:18px;background:#ebebeb"></div>
<div class="a chk" style="left:252px;top:305px"><svg width="12" height="12" style="position:absolute;left:-1px;top:-1px"></svg></div>
<div class="a fld" style="left:1250px;top:320px;width:34px;height:18px;background:#c0e0fd"></div>
<div class="a nm" style="left:1231.0px;top:321.5px;width:73px;height:16px;line-height:16px;text-align:center;"><span id="t66" class="s">1380</span></div>
<div class="a fld" style="left:1182px;top:320px;width:68px;height:18px;background:#c0e0fd"></div>
<div class="a nm" style="left:1163.0px;top:321.5px;width:107px;height:16px;line-height:16px;text-align:center;"><span id="t67" class="s" style="transform:scaleX(0.9841);transform-origin:center center">445202851</span></div>
<div class="a lov" style="left:1165px;top:321px;width:16px;height:17px;background:#c0e0fd"><svg width="16" height="17"><path d="M6.5 2.5 h3 v4 h3 l-4.5 4.5 l-4.5 -4.5 h3 z" fill="#a6a6a6"/><rect x="3.5" y="13" width="9" height="1.3" fill="#a6a6a6"/></svg></div>
<div class="a fld" style="left:1013px;top:320px;width:151px;height:18px;background:#c0e0fd"></div>
<div class="a ar" style="left:861px;top:322.5px;width:300px;height:14px;line-height:14px;text-align:right;"><span id="t68" class="s" style="transform:scaleX(0.9718);transform-origin:right center">ريناد بنت مبارك بن جعبول ال بريك</span></div>
<div class="a fld" style="left:897px;top:320px;width:116px;height:18px;background:#c0e0fd"></div>
<div class="a ar" style="left:710px;top:322.5px;width:300px;height:14px;line-height:14px;text-align:right;"><span id="t69" class="s" style="transform:scaleX(0.9385);transform-origin:right center">الرياض- طالبات</span></div>
<div class="a fld" style="left:747px;top:320px;width:150px;height:18px;background:#c0e0fd"></div>
<div class="a ar" style="left:594px;top:322.5px;width:300px;height:14px;line-height:14px;text-align:right;"><span id="t70" class="s" style="transform:scaleX(0.8587);transform-origin:right center">العلوم الطبية التطبيقية</span></div>
<div class="a fld" style="left:597px;top:320px;width:149px;height:18px;background:#c0e0fd"></div>
<div class="a ar" style="left:444px;top:322.5px;width:300px;height:14px;line-height:14px;text-align:right;"><span id="t71" class="s" style="transform:scaleX(0.8990);transform-origin:right center">علاج علل النطق والسمع</span></div>
<div class="a fld" style="left:548px;top:320px;width:48px;height:18px;background:#c0e0fd"></div>
<div class="a nm" style="left:529.0px;top:321.5px;width:87px;height:16px;line-height:16px;text-align:center;"><span id="t72" class="s">4.77</span></div>
<div class="a fld" style="left:493px;top:320px;width:54px;height:18px;background:#c0e0fd"></div>
<div class="a ar" style="left:370.5px;top:322.5px;width:300px;height:14px;line-height:14px;text-align:center;"><span id="t73" class="s" style="transform:scaleX(0.6765);transform-origin:center center">السادس</span></div>
<div class="a fld" style="left:415px;top:320px;width:77px;height:18px;background:#c0e0fd"></div>
<div class="a ar" style="left:189px;top:323.5px;width:300px;height:14px;line-height:14px;text-align:right;"><span id="t74" class="s" style="transform:scaleX(0.9167);transform-origin:right center">مدخل</span></div>
<div class="a" style="left:418px;top:323px;width:13px;height:13px;background:#d0d0d0"><svg width="13" height="13"><path d="M3 5.0 h7 l-3.5 3.5 z" fill="#9a9a9a"/></svg></div>
<div class="a fld" style="left:344px;top:320px;width:70px;height:18px;background:#c0e0fd"></div>
<div class="a nm" style="left:325.0px;top:321.5px;width:109px;height:16px;line-height:16px;text-align:center;"><span id="t75" class="s" style="transform:scaleX(0.9844);transform-origin:center center">1447-03-19</span></div>
<div class="a fld" style="left:273px;top:320px;width:70px;height:18px;background:#c0e0fd"></div>
<div class="a chk" style="left:252px;top:323px"><svg width="12" height="12" style="position:absolute;left:-1px;top:-1px"><path d="M2 5.5 L4.8 9 L10.5 2" stroke="#3c3205" stroke-width="2.3" fill="none"/></svg></div>
<div class="a" style="left:252px;top:320px;width:12px;height:17px;border-top:1px dashed #222;border-bottom:1px dashed #222"></div>
<div class="a fld" style="left:1250px;top:338px;width:34px;height:18px;background:#ebebeb"></div>
<div class="a nm" style="left:1231.0px;top:339.5px;width:73px;height:16px;line-height:16px;text-align:center;"><span id="t76" class="s">1384</span></div>
<div class="a fld" style="left:1182px;top:338px;width:68px;height:18px;background:#fff"></div>
<div class="a nm" style="left:1163.0px;top:339.5px;width:107px;height:16px;line-height:16px;text-align:center;"><span id="t77" class="s" style="transform:scaleX(0.9841);transform-origin:center center">443160641</span></div>
<div class="a lov" style="left:1165px;top:339px;width:16px;height:17px;background:#ebebeb"><svg width="16" height="17"><path d="M6.5 2.5 h3 v4 h3 l-4.5 4.5 l-4.5 -4.5 h3 z" fill="#a6a6a6"/><rect x="3.5" y="13" width="9" height="1.3" fill="#a6a6a6"/></svg></div>
<div class="a fld" style="left:1013px;top:338px;width:151px;height:18px;background:#ebebeb"></div>
<div class="a ar" style="left:861px;top:340.5px;width:300px;height:14px;line-height:14px;text-align:right;"><span id="t78" class="s" style="transform:scaleX(0.9291);transform-origin:right center">سعود بن ناصر بن ابراهيم بن ثنيان</span></div>
<div class="a fld" style="left:897px;top:338px;width:116px;height:18px;background:#ebebeb"></div>
<div class="a ar" style="left:710px;top:340.5px;width:300px;height:14px;line-height:14px;text-align:right;"><span id="t79" class="s" style="transform:scaleX(0.9492);transform-origin:right center">الرياض- طلاب</span></div>
<div class="a fld" style="left:747px;top:338px;width:150px;height:18px;background:#ebebeb"></div>
<div class="a ar" style="left:594px;top:340.5px;width:300px;height:14px;line-height:14px;text-align:right;"><span id="t80" class="s" style="transform:scaleX(0.9196);transform-origin:right center">العلوم الإنسانية والاجتماعية</span></div>
<div class="a fld" style="left:597px;top:338px;width:149px;height:18px;background:#ebebeb"></div>
<div class="a ar" style="left:444px;top:340.5px;width:300px;height:14px;line-height:14px;text-align:right;"><span id="t81" class="s" style="transform:scaleX(0.9186);transform-origin:right center">مسار العلاقات العامة</span></div>
<div class="a fld" style="left:548px;top:338px;width:48px;height:18px;background:#ebebeb"></div>
<div class="a nm" style="left:529.0px;top:339.5px;width:87px;height:16px;line-height:16px;text-align:center;"><span id="t82" class="s">3.68</span></div>
<div class="a fld" style="left:493px;top:338px;width:54px;height:18px;background:#ebebeb"></div>
<div class="a ar" style="left:370.5px;top:340.5px;width:300px;height:14px;line-height:14px;text-align:center;"><span id="t83" class="s" style="transform:scaleX(1.0000);transform-origin:center center">الرابع</span></div>
<div class="a fld" style="left:415px;top:338px;width:77px;height:18px;background:#fff"></div>
<div class="a ar" style="left:189px;top:341.5px;width:300px;height:14px;line-height:14px;text-align:right;"><span id="t84" class="s" style="transform:scaleX(0.8095);transform-origin:right center">ملغي</span></div>
<div class="a" style="left:418px;top:341px;width:13px;height:13px;background:#d0d0d0"><svg width="13" height="13"><path d="M3 5.0 h7 l-3.5 3.5 z" fill="#9a9a9a"/></svg></div>
<div class="a fld" style="left:344px;top:338px;width:70px;height:18px;background:#ebebeb"></div>
<div class="a nm" style="left:325.0px;top:339.5px;width:109px;height:16px;line-height:16px;text-align:center;"><span id="t85" class="s" style="transform:scaleX(0.9844);transform-origin:center center">1447-03-19</span></div>
<div class="a fld" style="left:273px;top:338px;width:70px;height:18px;background:#ebebeb"></div>
<div class="a chk" style="left:252px;top:341px"><svg width="12" height="12" style="position:absolute;left:-1px;top:-1px"></svg></div>
<div class="a fld" style="left:1250px;top:356px;width:34px;height:18px;background:#ebebeb"></div>
<div class="a nm" style="left:1231.0px;top:357.5px;width:73px;height:16px;line-height:16px;text-align:center;"><span id="t86" class="s">1388</span></div>
<div class="a fld" style="left:1182px;top:356px;width:68px;height:18px;background:#fff"></div>
<div class="a nm" style="left:1163.0px;top:357.5px;width:107px;height:16px;line-height:16px;text-align:center;"><span id="t87" class="s" style="transform:scaleX(0.9841);transform-origin:center center">444204522</span></div>
<div class="a lov" style="left:1165px;top:357px;width:16px;height:17px;background:#ebebeb"><svg width="16" height="17"><path d="M6.5 2.5 h3 v4 h3 l-4.5 4.5 l-4.5 -4.5 h3 z" fill="#a6a6a6"/><rect x="3.5" y="13" width="9" height="1.3" fill="#a6a6a6"/></svg></div>
<div class="a fld" style="left:1013px;top:356px;width:151px;height:18px;background:#ebebeb"></div>
<div class="a ar" style="left:861px;top:358.5px;width:300px;height:14px;line-height:14px;text-align:right;"><span id="t88" class="s" style="transform:scaleX(0.9798);transform-origin:right center">حلا  اسامه  خليل الكحلوت</span></div>
<div class="a fld" style="left:897px;top:356px;width:116px;height:18px;background:#ebebeb"></div>
<div class="a ar" style="left:710px;top:358.5px;width:300px;height:14px;line-height:14px;text-align:right;"><span id="t89" class="s" style="transform:scaleX(0.9385);transform-origin:right center">الرياض- طالبات</span></div>
<div class="a fld" style="left:747px;top:356px;width:150px;height:18px;background:#ebebeb"></div>
<div class="a ar" style="left:594px;top:358.5px;width:300px;height:14px;line-height:14px;text-align:right;"><span id="t90" class="s" style="transform:scaleX(0.8774);transform-origin:right center">علوم الحاسب والمعلومات</span></div>
<div class="a fld" style="left:597px;top:356px;width:149px;height:18px;background:#ebebeb"></div>
<div class="a ar" style="left:444px;top:358.5px;width:300px;height:14px;line-height:14px;text-align:right;"><span id="t91" class="s" style="transform:scaleX(0.9286);transform-origin:right center">هندسة البرمجيات</span></div>
<div class="a fld" style="left:548px;top:356px;width:48px;height:18px;background:#ebebeb"></div>
<div class="a nm" style="left:529.0px;top:357.5px;width:87px;height:16px;line-height:16px;text-align:center;"><span id="t92" class="s">4.98</span></div>
<div class="a fld" style="left:493px;top:356px;width:54px;height:18px;background:#ebebeb"></div>
<div class="a ar" style="left:370.5px;top:358.5px;width:300px;height:14px;line-height:14px;text-align:center;"><span id="t93" class="s" style="transform:scaleX(0.8846);transform-origin:center center">السابع</span></div>
<div class="a fld" style="left:415px;top:356px;width:77px;height:18px;background:#fff"></div>
<div class="a ar" style="left:189px;top:359.5px;width:300px;height:14px;line-height:14px;text-align:right;"><span id="t94" class="s" style="transform:scaleX(0.9592);transform-origin:right center">معتمد نهائي</span></div>
<div class="a" style="left:418px;top:359px;width:13px;height:13px;background:#d0d0d0"><svg width="13" height="13"><path d="M3 5.0 h7 l-3.5 3.5 z" fill="#9a9a9a"/></svg></div>
<div class="a fld" style="left:344px;top:356px;width:70px;height:18px;background:#ebebeb"></div>
<div class="a nm" style="left:325.0px;top:357.5px;width:109px;height:16px;line-height:16px;text-align:center;"><span id="t95" class="s" style="transform:scaleX(0.9844);transform-origin:center center">1447-03-20</span></div>
<div class="a fld" style="left:273px;top:356px;width:70px;height:18px;background:#ebebeb"></div>
<div class="a chk" style="left:252px;top:359px"><svg width="12" height="12" style="position:absolute;left:-1px;top:-1px"></svg></div>
<div class="a fld" style="left:1250px;top:374px;width:34px;height:18px;background:#ebebeb"></div>
<div class="a nm" style="left:1231.0px;top:375.5px;width:73px;height:16px;line-height:16px;text-align:center;"><span id="t96" class="s">1398</span></div>
<div class="a fld" style="left:1182px;top:374px;width:68px;height:18px;background:#fff"></div>
<div class="a nm" style="left:1163.0px;top:375.5px;width:107px;height:16px;line-height:16px;text-align:center;"><span id="t97" class="s" style="transform:scaleX(0.9841);transform-origin:center center">444100790</span></div>
<div class="a lov" style="left:1165px;top:375px;width:16px;height:17px;background:#ebebeb"><svg width="16" height="17"><path d="M6.5 2.5 h3 v4 h3 l-4.5 4.5 l-4.5 -4.5 h3 z" fill="#a6a6a6"/><rect x="3.5" y="13" width="9" height="1.3" fill="#a6a6a6"/></svg></div>
<div class="a fld" style="left:1013px;top:374px;width:151px;height:18px;background:#ebebeb"></div>
<div class="a ar" style="left:861px;top:376.5px;width:300px;height:14px;line-height:14px;text-align:right;"><span id="t98" class="s" style="transform:scaleX(0.9137);transform-origin:right center">عبدالله بن محمد بن سرور الحربي</span></div>
<div class="a fld" style="left:897px;top:374px;width:116px;height:18px;background:#ebebeb"></div>
<div class="a ar" style="left:710px;top:376.5px;width:300px;height:14px;line-height:14px;text-align:right;"><span id="t99" class="s" style="transform:scaleX(0.9492);transform-origin:right center">الرياض- طلاب</span></div>
<div class="a fld" style="left:747px;top:374px;width:150px;height:18px;background:#ebebeb"></div>
<div class="a ar" style="left:594px;top:376.5px;width:300px;height:14px;line-height:14px;text-align:right;"><span id="t100" class="s" style="transform:scaleX(0.9438);transform-origin:right center">علوم الأغذية والزراعة</span></div>
<div class="a fld" style="left:597px;top:374px;width:149px;height:18px;background:#ebebeb"></div>
<div class="a ar" style="left:444px;top:376.5px;width:300px;height:14px;line-height:14px;text-align:right;"><span id="t101" class="s" style="transform:scaleX(0.8986);transform-origin:right center">الهندسة الزراعية</span></div>
<div class="a fld" style="left:548px;top:374px;width:48px;height:18px;background:#ebebeb"></div>
<div class="a nm" style="left:529.0px;top:375.5px;width:87px;height:16px;line-height:16px;text-align:center;"><span id="t102" class="s">4</span></div>
<div class="a fld" style="left:493px;top:374px;width:54px;height:18px;background:#ebebeb"></div>
<div class="a ar" style="left:370.5px;top:376.5px;width:300px;height:14px;line-height:14px;text-align:center;"><span id="t103" class="s" style="transform:scaleX(0.6970);transform-origin:center center">الخامس</span></div>
<div class="a fld" style="left:415px;top:374px;width:77px;height:18px;background:#fff"></div>
<div class="a ar" style="left:189px;top:377.5px;width:300px;height:14px;line-height:14px;text-align:right;"><span id="t104" class="s" style="transform:scaleX(0.9592);transform-origin:right center">معتمد نهائي</span></div>
<div class="a" style="left:418px;top:377px;width:13px;height:13px;background:#d0d0d0"><svg width="13" height="13"><path d="M3 5.0 h7 l-3.5 3.5 z" fill="#9a9a9a"/></svg></div>
<div class="a fld" style="left:344px;top:374px;width:70px;height:18px;background:#ebebeb"></div>
<div class="a nm" style="left:325.0px;top:375.5px;width:109px;height:16px;line-height:16px;text-align:center;"><span id="t105" class="s" style="transform:scaleX(0.9844);transform-origin:center center">1447-03-22</span></div>
<div class="a fld" style="left:273px;top:374px;width:70px;height:18px;background:#ebebeb"></div>
<div class="a chk" style="left:252px;top:377px"><svg width="12" height="12" style="position:absolute;left:-1px;top:-1px"></svg></div>
<div class="a fld" style="left:1250px;top:392px;width:34px;height:18px;background:#ebebeb"></div>
<div class="a nm" style="left:1231.0px;top:393.5px;width:73px;height:16px;line-height:16px;text-align:center;"><span id="t106" class="s">1406</span></div>
<div class="a fld" style="left:1182px;top:392px;width:68px;height:18px;background:#fff"></div>
<div class="a nm" style="left:1163.0px;top:393.5px;width:107px;height:16px;line-height:16px;text-align:center;"><span id="t107" class="s" style="transform:scaleX(0.9841);transform-origin:center center">443106884</span></div>
<div class="a lov" style="left:1165px;top:393px;width:16px;height:17px;background:#ebebeb"><svg width="16" height="17"><path d="M6.5 2.5 h3 v4 h3 l-4.5 4.5 l-4.5 -4.5 h3 z" fill="#a6a6a6"/><rect x="3.5" y="13" width="9" height="1.3" fill="#a6a6a6"/></svg></div>
<div class="a fld" style="left:1013px;top:392px;width:151px;height:18px;background:#ebebeb"></div>
<div class="a ar" style="left:861px;top:394.5px;width:300px;height:14px;line-height:14px;text-align:right;"><span id="t108" class="s" style="transform:scaleX(0.9828);transform-origin:right center">مالك  موفق  عبدالرحمن صالح</span></div>
<div class="a fld" style="left:897px;top:392px;width:116px;height:18px;background:#ebebeb"></div>
<div class="a ar" style="left:710px;top:394.5px;width:300px;height:14px;line-height:14px;text-align:right;"><span id="t109" class="s" style="transform:scaleX(0.9492);transform-origin:right center">الرياض- طلاب</span></div>
<div class="a fld" style="left:747px;top:392px;width:150px;height:18px;background:#ebebeb"></div>
<div class="a ar" style="left:594px;top:394.5px;width:300px;height:14px;line-height:14px;text-align:right;"><span id="t110" class="s" style="transform:scaleX(0.8750);transform-origin:right center">الهندسة</span></div>
<div class="a fld" style="left:597px;top:392px;width:149px;height:18px;background:#ebebeb"></div>
<div class="a ar" style="left:444px;top:394.5px;width:300px;height:14px;line-height:14px;text-align:right;"><span id="t111" class="s" style="transform:scaleX(0.9256);transform-origin:right center">هندسة البترول والغاز الطبيعي</span></div>
<div class="a fld" style="left:548px;top:392px;width:48px;height:18px;background:#ebebeb"></div>
<div class="a nm" style="left:529.0px;top:393.5px;width:87px;height:16px;line-height:16px;text-align:center;"><span id="t112" class="s">4.99</span></div>
<div class="a fld" style="left:493px;top:392px;width:54px;height:18px;background:#ebebeb"></div>
<div class="a ar" style="left:370.5px;top:394.5px;width:300px;height:14px;line-height:14px;text-align:center;"><span id="t113" class="s" style="transform:scaleX(0.9200);transform-origin:center center">التاسع</span></div>
<div class="a fld" style="left:415px;top:392px;width:77px;height:18px;background:#fff"></div>
<div class="a ar" style="left:189px;top:395.5px;width:300px;height:14px;line-height:14px;text-align:right;"><span id="t114" class="s" style="transform:scaleX(0.9592);transform-origin:right center">معتمد نهائي</span></div>
<div class="a" style="left:418px;top:395px;width:13px;height:13px;background:#d0d0d0"><svg width="13" height="13"><path d="M3 5.0 h7 l-3.5 3.5 z" fill="#9a9a9a"/></svg></div>
<div class="a fld" style="left:344px;top:392px;width:70px;height:18px;background:#ebebeb"></div>
<div class="a nm" style="left:325.0px;top:393.5px;width:109px;height:16px;line-height:16px;text-align:center;"><span id="t115" class="s" style="transform:scaleX(0.9844);transform-origin:center center">1447-03-23</span></div>
<div class="a fld" style="left:273px;top:392px;width:70px;height:18px;background:#ebebeb"></div>
<div class="a chk" style="left:252px;top:395px"><svg width="12" height="12" style="position:absolute;left:-1px;top:-1px"></svg></div>
<div class="a fld" style="left:1250px;top:410px;width:34px;height:18px;background:#ebebeb"></div>
<div class="a nm" style="left:1231.0px;top:411.5px;width:73px;height:16px;line-height:16px;text-align:center;"><span id="t116" class="s">1418</span></div>
<div class="a fld" style="left:1182px;top:410px;width:68px;height:18px;background:#fff"></div>
<div class="a nm" style="left:1163.0px;top:411.5px;width:107px;height:16px;line-height:16px;text-align:center;"><span id="t117" class="s" style="transform:scaleX(0.9841);transform-origin:center center">444202595</span></div>
<div class="a lov" style="left:1165px;top:411px;width:16px;height:17px;background:#ebebeb"><svg width="16" height="17"><path d="M6.5 2.5 h3 v4 h3 l-4.5 4.5 l-4.5 -4.5 h3 z" fill="#a6a6a6"/><rect x="3.5" y="13" width="9" height="1.3" fill="#a6a6a6"/></svg></div>
<div class="a fld" style="left:1013px;top:410px;width:151px;height:18px;background:#ebebeb"></div>
<div class="a ar" style="left:861px;top:412.5px;width:300px;height:14px;line-height:14px;text-align:right;"><span id="t118" class="s" style="transform:scaleX(0.9214);transform-origin:right center">أصايل بنت محمد بن احمد عسيري</span></div>
<div class="a fld" style="left:897px;top:410px;width:116px;height:18px;background:#ebebeb"></div>
<div class="a ar" style="left:710px;top:412.5px;width:300px;height:14px;line-height:14px;text-align:right;"><span id="t119" class="s" style="transform:scaleX(0.9385);transform-origin:right center">الرياض- طالبات</span></div>
<div class="a fld" style="left:747px;top:410px;width:150px;height:18px;background:#ebebeb"></div>
<div class="a ar" style="left:594px;top:412.5px;width:300px;height:14px;line-height:14px;text-align:right;"><span id="t120" class="s" style="transform:scaleX(0.8587);transform-origin:right center">العلوم الطبية التطبيقية</span></div>
<div class="a fld" style="left:597px;top:410px;width:149px;height:18px;background:#ebebeb"></div>
<div class="a ar" style="left:444px;top:412.5px;width:300px;height:14px;line-height:14px;text-align:right;"><span id="t121" class="s" style="transform:scaleX(1.0000);transform-origin:right center">دكتور البصريات</span></div>
<div class="a fld" style="left:548px;top:410px;width:48px;height:18px;background:#ebebeb"></div>
<div class="a nm" style="left:529.0px;top:411.5px;width:87px;height:16px;line-height:16px;text-align:center;"><span id="t122" class="s">4.38</span></div>
<div class="a fld" style="left:493px;top:410px;width:54px;height:18px;background:#ebebeb"></div>
<div class="a ar" style="left:370.5px;top:412.5px;width:300px;height:14px;line-height:14px;text-align:center;"><span id="t123" class="s" style="transform:scaleX(0.8846);transform-origin:center center">السابع</span></div>
<div class="a fld" style="left:415px;top:410px;width:77px;height:18px;background:#fff"></div>
<div class="a ar" style="left:189px;top:413.5px;width:300px;height:14px;line-height:14px;text-align:right;"><span id="t124" class="s" style="transform:scaleX(0.8095);transform-origin:right center">ملغي</span></div>
<div class="a" style="left:418px;top:413px;width:13px;height:13px;background:#d0d0d0"><svg width="13" height="13"><path d="M3 5.0 h7 l-3.5 3.5 z" fill="#9a9a9a"/></svg></div>
<div class="a fld" style="left:344px;top:410px;width:70px;height:18px;background:#ebebeb"></div>
<div class="a nm" style="left:325.0px;top:411.5px;width:109px;height:16px;line-height:16px;text-align:center;"><span id="t125" class="s" style="transform:scaleX(0.9844);transform-origin:center center">1447-03-24</span></div>
<div class="a fld" style="left:273px;top:410px;width:70px;height:18px;background:#ebebeb"></div>
<div class="a chk" style="left:252px;top:413px"><svg width="12" height="12" style="position:absolute;left:-1px;top:-1px"></svg></div>
<div class="a fld" style="left:1250px;top:428px;width:34px;height:18px;background:#ebebeb"></div>
<div class="a nm" style="left:1231.0px;top:429.5px;width:73px;height:16px;line-height:16px;text-align:center;"><span id="t126" class="s">1427</span></div>
<div class="a fld" style="left:1182px;top:428px;width:68px;height:18px;background:#fff"></div>
<div class="a nm" style="left:1163.0px;top:429.5px;width:107px;height:16px;line-height:16px;text-align:center;"><span id="t127" class="s" style="transform:scaleX(1.0000);transform-origin:center center">441100793</span></div>
<div class="a lov" style="left:1165px;top:429px;width:16px;height:17px;background:#ebebeb"><svg width="16" height="17"><path d="M6.5 2.5 h3 v4 h3 l-4.5 4.5 l-4.5 -4.5 h3 z" fill="#a6a6a6"/><rect x="3.5" y="13" width="9" height="1.3" fill="#a6a6a6"/></svg></div>
<div class="a fld" style="left:1013px;top:428px;width:151px;height:18px;background:#ebebeb"></div>
<div class="a ar" style="left:861px;top:430.5px;width:300px;height:14px;line-height:14px;text-align:right;"><span id="t128" class="s" style="transform:scaleX(0.8733);transform-origin:right center">سعود بن خالد بن عبد الرحمن الرميح</span></div>
<div class="a fld" style="left:897px;top:428px;width:116px;height:18px;background:#ebebeb"></div>
<div class="a ar" style="left:710px;top:430.5px;width:300px;height:14px;line-height:14px;text-align:right;"><span id="t129" class="s" style="transform:scaleX(0.9492);transform-origin:right center">الرياض- طلاب</span></div>
<div class="a fld" style="left:747px;top:428px;width:150px;height:18px;background:#ebebeb"></div>
<div class="a ar" style="left:594px;top:430.5px;width:300px;height:14px;line-height:14px;text-align:right;"><span id="t130" class="s" style="transform:scaleX(0.9032);transform-origin:right center">الصيدلة</span></div>
<div class="a fld" style="left:597px;top:428px;width:149px;height:18px;background:#ebebeb"></div>
<div class="a ar" style="left:444px;top:430.5px;width:300px;height:14px;line-height:14px;text-align:right;"><span id="t131" class="s" style="transform:scaleX(1.0204);transform-origin:right center">دكتور صيدلة</span></div>
<div class="a fld" style="left:548px;top:428px;width:48px;height:18px;background:#ebebeb"></div>
<div class="a nm" style="left:529.0px;top:429.5px;width:87px;height:16px;line-height:16px;text-align:center;"><span id="t132" class="s">4.83</span></div>
<div class="a fld" style="left:493px;top:428px;width:54px;height:18px;background:#ebebeb"></div>
<div class="a ar" style="left:370.5px;top:430.5px;width:300px;height:14px;line-height:14px;text-align:center;"><span id="t133" class="s" style="transform:scaleX(0.8214);transform-origin:center center">العاشر</span></div>
<div class="a fld" style="left:415px;top:428px;width:77px;height:18px;background:#fff"></div>
<div class="a ar" style="left:189px;top:431.5px;width:300px;height:14px;line-height:14px;text-align:right;"><span id="t134" class="s" style="transform:scaleX(0.8095);transform-origin:right center">ملغي</span></div>
<div class="a" style="left:418px;top:431px;width:13px;height:13px;background:#d0d0d0"><svg width="13" height="13"><path d="M3 5.0 h7 l-3.5 3.5 z" fill="#9a9a9a"/></svg></div>
<div class="a fld" style="left:344px;top:428px;width:70px;height:18px;background:#ebebeb"></div>
<div class="a nm" style="left:325.0px;top:429.5px;width:109px;height:16px;line-height:16px;text-align:center;"><span id="t135" class="s" style="transform:scaleX(0.9844);transform-origin:center center">1447-03-25</span></div>
<div class="a fld" style="left:273px;top:428px;width:70px;height:18px;background:#ebebeb"></div>
<div class="a chk" style="left:252px;top:431px"><svg width="12" height="12" style="position:absolute;left:-1px;top:-1px"></svg></div>
<div class="a" style="left:1285px;top:302px;width:13px;height:15px;background:#d3d3d3;border-radius:6px 6px 1px 1px;border-bottom:1px solid #b0ae96;box-shadow:inset 0 1px 0 #f4f4f4"><svg width="13" height="13"><path d="M2.5 8.5 h8 l-4 -4 z" fill="#a9a890"/></svg></div>
<div class="a" style="left:1285px;top:318px;width:13px;height:10px;background:#d3d3d3;border-bottom:1px solid #b0ae96"><svg width="13" height="10"><path d="M9 2 l2 -1 M2 8 l2 -1" stroke="#fff" stroke-width="1.5"/></svg></div>
<div class="a" style="left:1285px;top:427px;width:13px;height:15px;background:#d3d3d3;border-radius:1px 1px 6px 6px;border-top:1px solid #f4f4f4"><svg width="13" height="13"><path d="M2.5 5 h8 l-4 4 z" fill="#a9a890"/></svg></div>
<div class="a fld" style="left:1082px;top:450px;width:112px;height:18px;background:#c0e0fd"></div>
<div class="a nm" style="left:1063.0px;top:451.5px;width:151px;height:16px;line-height:16px;text-align:center;"><span id="t136" class="s" style="transform:scaleX(0.9857);transform-origin:center center">0532543698</span></div>
<div class="a lbl" style="left:920px;top:452.0px;width:300px;height:14px;line-height:14px;text-align:right;"><span id="t137" class="s" style="transform:scaleX(0.9259);transform-origin:right center">الجوال</span></div>
<div class="a fld" style="left:946px;top:477px;width:249px;height:18px;background:#c0e0fd"></div>
<div class="a nm" style="left:950px;top:479.0px;width:288px;height:16px;line-height:16px;text-align:left;"><span id="t138" class="s" style="transform:scaleX(1.0000);transform-origin:left center">445202851@student.ksu.edu.sa</span></div>
<div class="a lbl" style="left:958px;top:480.0px;width:300px;height:14px;line-height:14px;text-align:right;"><span id="t139" class="s" style="transform:scaleX(0.9130);transform-origin:right center">البريد الإلكتروني</span></div>
<div class="a fld" style="left:272px;top:451px;width:569px;height:16px;background:#c0e0fd"></div>
<div class="a lbl" style="left:578px;top:452.0px;width:300px;height:14px;line-height:14px;text-align:right;"><span id="t140" class="s" style="transform:scaleX(0.9459);transform-origin:right center">ملاحظات</span></div>
<div class="a fld" style="left:272px;top:478px;width:569px;height:17px;background:#c0e0fd"></div>
<div class="a lbl" style="left:589px;top:480.0px;width:300px;height:14px;line-height:14px;text-align:right;"><span id="t141" class="s" style="transform:scaleX(0.9388);transform-origin:right center">سبب الإلغاء</span></div>
<div class="a fld" style="left:272px;top:505px;width:569px;height:16px;background:#c0e0fd"></div>
<div class="a lbl" style="left:636px;top:506.0px;width:300px;height:14px;line-height:14px;text-align:right;"><span id="t142" class="s" style="transform:scaleX(0.9490);transform-origin:right center">أسباب وملاحظات الخبير</span></div>
<div class="a" style="left:272px;top:542px;width:1021px;height:94px;border:1px solid #a9a890;border-radius:5px"></div>
<div class="a" style="left:699px;top:534px;width:165px;height:15px;background:#e0dfc0"></div>
<div class="a gt" style="left:532px;top:530.0px;width:300px;height:14px;line-height:14px;text-align:right;"><span id="t143" class="s" style="transform:scaleX(1.0211);transform-origin:right center">بيانات الخبير ـ الموهوب</span></div>
<div class="a fld" style="left:1098px;top:556px;width:110px;height:16px;background:#c0e0fd"></div>
<div class="a ar" style="left:905px;top:559.0px;width:300px;height:14px;line-height:14px;text-align:right;"><span id="t144" class="s" style="transform:scaleX(1.0000);transform-origin:right center">محاضر</span></div>
<div class="a" style="left:1101px;top:559px;width:13px;height:11px;background:#d0d0d0"><svg width="13" height="11"><path d="M3 4.0 h7 l-3.5 3.5 z" fill="#9a9a9a"/></svg></div>
<div class="a lbl" style="left:928px;top:557.0px;width:300px;height:14px;line-height:14px;text-align:right;"><span id="t145" class="s" style="transform:scaleX(0.9474);transform-origin:right center">الفئة</span></div>
<div class="a fld" style="left:1118px;top:580px;width:90px;height:16px;background:#c0e0fd"></div>
<div class="a nm" style="left:1099.0px;top:580.5px;width:129px;height:16px;line-height:16px;text-align:center;"><span id="t146" class="s">37804</span></div>
<div class="a lov" style="left:1100px;top:581px;width:17px;height:15px;background:#c0e0fd"><svg width="17" height="15"><path d="M7.0 2.5 h3 v4 h3 l-4.5 4.5 l-4.5 -4.5 h3 z" fill="#a6a6a6"/><rect x="4.0" y="11" width="9" height="1.3" fill="#a6a6a6"/></svg></div>
<div class="a fld" style="left:857px;top:580px;width:241px;height:16px;background:#c0e0fd"></div>
<div class="a ar" style="left:795px;top:581.5px;width:300px;height:14px;line-height:14px;text-align:right;"><span id="t147" class="s" style="transform:scaleX(0.7222);transform-origin:right center">نوره فهد سليمان السديرى</span></div>
<div class="a lbl" style="left:931px;top:581.0px;width:300px;height:14px;line-height:14px;text-align:right;"><span id="t148" class="s" style="transform:scaleX(0.7917);transform-origin:right center">الاسم</span></div>
<div class="a fld" style="left:855px;top:602px;width:353px;height:17px;background:#c0e0fd"></div>
<div class="a ar" style="left:906px;top:604.0px;width:300px;height:14px;line-height:14px;text-align:right;"><span id="t149" class="s" style="transform:scaleX(0.8852);transform-origin:right center">العلوم الطبية التطبيقية - علوم التأهيل الصحي</span></div>
<div class="a lbl" style="left:963px;top:604.0px;width:300px;height:14px;line-height:14px;text-align:right;"><span id="t150" class="s" style="transform:scaleX(0.9153);transform-origin:right center">الكلية ـ القسم</span></div>
<div class="a fld" style="left:647px;top:556px;width:111px;height:16px;background:#c0e0fd"></div>
<div class="a ar" style="left:455px;top:559.0px;width:300px;height:14px;line-height:14px;text-align:right;"><span id="t151" class="s" style="transform:scaleX(0.8542);transform-origin:right center">مع الموافقة</span></div>
<div class="a" style="left:650px;top:559px;width:13px;height:11px;background:#d0d0d0"><svg width="13" height="11"><path d="M3 4.0 h7 l-3.5 3.5 z" fill="#9a9a9a"/></svg></div>
<div class="a lbl" style="left:512px;top:557.0px;width:300px;height:14px;line-height:14px;text-align:right;"><span id="t152" class="s" style="transform:scaleX(0.9636);transform-origin:right center">حالة الموافقة</span></div>
<div class="a fld" style="left:647px;top:580px;width:111px;height:16px;background:#c0e0fd"></div>
<div class="a nm" style="left:628.0px;top:580.5px;width:150px;height:16px;line-height:16px;text-align:center;"><span id="t153" class="s" style="transform:scaleX(0.9844);transform-origin:center center">1447-03-25</span></div>
<div class="a lbl" style="left:516px;top:581.0px;width:300px;height:14px;line-height:14px;text-align:right;"><span id="t154" class="s" style="transform:scaleX(0.9828);transform-origin:right center">تاريخ الموافقة</span></div>
<div class="a fld" style="left:647px;top:602px;width:111px;height:17px;background:#c0e0fd"></div>
<div class="a nm" style="left:628.0px;top:603.0px;width:150px;height:16px;line-height:16px;text-align:center;"><span id="t155" class="s" style="transform:scaleX(1.0000);transform-origin:center center">966555125202</span></div>
<div class="a lbl" style="left:485px;top:604.0px;width:300px;height:14px;line-height:14px;text-align:right;"><span id="t156" class="s" style="transform:scaleX(0.9259);transform-origin:right center">الجوال</span></div>
<div class="a fld" style="left:415px;top:580px;width:112px;height:16px;background:#c0e0fd"></div>
<div class="a lbl" style="left:305px;top:581.0px;width:300px;height:14px;line-height:14px;text-align:right;"><span id="t157" class="s" style="transform:scaleX(1.0000);transform-origin:right center">تاريخ اعتماد الخطة</span></div>
<div class="a fld" style="left:279px;top:602px;width:248px;height:17px;background:#c0e0fd"></div>
<div class="a nm" style="left:283px;top:603.0px;width:287px;height:16px;line-height:16px;text-align:left;"><span id="t158" class="s" style="transform:scaleX(0.9793);transform-origin:left center">nalsudairy@KSU.EDU.SA</span></div>
<div class="a lbl" style="left:292px;top:604.0px;width:300px;height:14px;line-height:14px;text-align:right;"><span id="t159" class="s" style="transform:scaleX(0.9130);transform-origin:right center">البريد الإلكتروني</span></div>
<svg class="a" style="left:0;top:660px" width="600" height="132" shape-rendering="crispEdges">
<defs>
<pattern id="dith" x="0" y="0" width="2" height="2" patternUnits="userSpaceOnUse"><rect width="2" height="2" fill="#c9c9c9"/><rect x="1" y="1" width="1" height="1" fill="#fff"/></pattern><pattern id="dith2" x="0" y="0" width="2" height="2" patternUnits="userSpaceOnUse"><rect width="2" height="2" fill="#fff"/><rect x="0" y="0" width="1" height="1" fill="#c9c9c9"/><rect x="1" y="1" width="1" height="1" fill="#c9c9c9"/></pattern>
<mask id="hm" maskUnits="userSpaceOnUse" x="0" y="0" width="600" height="132">
<g transform="scale(1.36,1)" font-family="Liberation Sans" font-weight="bold" font-style="italic" font-size="58">
<text x="-5.9 4.4 38.2 85.3 107.4 147.8 183.1 211.8 253.7 291.2 313.2 350.0" y="88" fill="#fff" stroke="#fff" stroke-width="32" stroke-linejoin="round">iveTechSoft.</text>
</g>
<path d="M0 84 H480 Q505 100 500 132 H0 Z" fill="#fff"/><path d="M0 33 Q10 30 110 29 L450 26 Q470 28 475 40 V70 H0 Z" fill="#fff"/>
<circle cx="20" cy="192" r="87.5" fill="none" stroke="#000" stroke-width="17"/>
<rect x="0" y="127" width="67" height="10" fill="#000"/>
<rect x="100" y="97" width="390" height="20" fill="#000"/><path d="M155 132 V123 Q175 118 190 128 V132 Z" fill="#000"/>
<circle cx="296" cy="121" r="5" fill="#000"/>
<g transform="scale(1.36,1)" font-family="Liberation Sans" font-weight="bold" font-style="italic" font-size="58">
<text x="-5.9 4.4 38.2 85.3 107.4 147.8 183.1 211.8 253.7 291.2 313.2 350.0" y="88" fill="#000" stroke="#000" stroke-width="2.2" stroke-linejoin="round">iveTechSoft.</text>
</g>
</mask>
</defs>
<rect width="600" height="132" fill="url(#dith)" mask="url(#hm)"/><rect x="100" y="97" width="390" height="20" fill="url(#dith2)"/><circle cx="355" cy="132" r="6" fill="#fff"/>
</svg>
</body></html>
